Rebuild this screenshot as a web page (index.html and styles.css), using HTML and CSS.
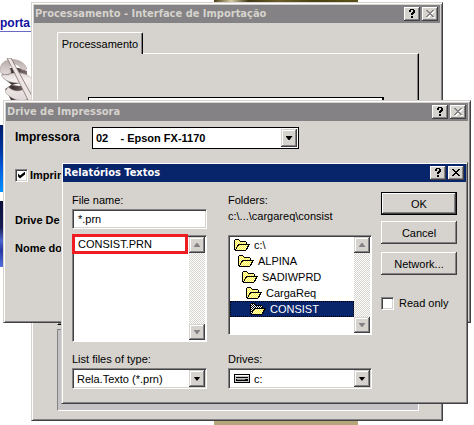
FILE: index.html
```html
<!DOCTYPE html>
<html lang="pt">
<head>
<meta charset="utf-8">
<title>Relatórios Textos</title>
<link rel="stylesheet" href="styles.css">
</head>
<body>
<svg class="defs" aria-hidden="true">
  <defs>
    <pattern id="dither" width="2" height="2" patternUnits="userSpaceOnUse">
      <rect width="2" height="2" fill="#fff04a"/><rect width="1" height="1" fill="#fffbc0"/><rect x="1" y="1" width="1" height="1" fill="#fffbc0"/>
    </pattern>
    <pattern id="shade" width="2" height="2" patternUnits="userSpaceOnUse">
      <rect width="2" height="2" fill="#000"/><rect width="1" height="1" fill="#fff"/><rect x="1" y="1" width="1" height="1" fill="#fff"/>
    </pattern>
    <symbol id="folder" viewBox="0 0 16 12">
      <path d="M0 1h1V0h4v1h1v1h6v1h1v2h3v1h-1v2h-1v2h-1v1h-1v1H1v-1H0z" fill="#000"/>
      <path d="M1 1h4v1h1v1h6v2H4v1H3v2H2v2H1z" fill="url(#dither)"/>
      <path d="M5 6h9v1h-1v2h-1v2H2v-1h1V8h1V7h1z" fill="url(#dither)"/>
    </symbol>
    <symbol id="folder-open" viewBox="0 0 16 12">
      <path d="M0 1h1V0h4v1h1v1h6v1h1v2h3v1h-1v2h-1v2h-1v1h-1v1H1v-1H0z" fill="#000"/>
      <path d="M1 1h4v1h1v1h6v2H4v1H3v2H2v2H1z" fill="url(#shade)"/>
      <path d="M5 6h9v1h-1v2h-1v2H2v-1h1V8h1V7h1z" fill="url(#dither)"/>
    </symbol>
    <symbol id="help" viewBox="0 0 16 14">
      <path d="M5 3h1V2h4v1h1v3h-1v1H9v1H7V6h1V5h1V3H7v2H5zM7 9h2v2H7z" fill="#000"/>
    </symbol>
    <symbol id="cross" viewBox="0 0 16 14">
      <path d="M4 3h2v1h1v1h2V4h1V3h2v1h-1v1h-1v1H9v1h1v1h1v1h1v1h-2V9H9V8H7v1H6v1H4V9h1V8h1V7h1V6H6V5H5V4H4z"/>
    </symbol>
  </defs>
</svg>
<main class="desktop">
  <div class="photo photo-top"></div>
  <div class="photo photo-bottom"></div>
  <a class="site-link" href="#">porta</a>
  <svg class="dollar" viewBox="0 0 32 44" aria-hidden="true">
    <defs>
      <linearGradient id="metal" x2="0" y2="1"><stop offset="0" stop-color="#b5aaa8"/><stop offset=".5" stop-color="#f4eeee"/><stop offset="1" stop-color="#e0d8d8"/></linearGradient>
      <linearGradient id="side"><stop offset="0" stop-color="#8a7a76"/><stop offset=".4" stop-color="#3c302e"/><stop offset="1" stop-color="#8a7a78"/></linearGradient>
    </defs>
    <path d="M1 10 3 20 12 27 20 25 27 26V13l-8-3zM5 31l6-4 18 2v12l-3 3H12z" fill="url(#side)"/>
    <path d="M27 11C25 4 16 0 9 2 1 3-1 10 1 15c5 3 10 2 10-1 0-3-3-5-1-7 3-3 10 0 12 5zM1 17c6 0 14-3 20-2 5 1 9 3 11 6v18c-8 6-20 4-27-5l3-5c6 5 13 5 17 1 2-3 0-5-5-5-7 0-15-1-19-8z" fill="url(#metal)" stroke="#a29592" stroke-width=".5"/>
    <path d="M7 0h4l21 38v6h-3z" fill="#ece4e4" stroke="#74625f" stroke-width=".7"/>
  </svg>
  <div class="strip strip-sky"></div>
  <div class="strip strip-city"></div>

  <section class="window win-process">
    <header class="titlebar inactive"><h2>Processamento - Interface de Importação</h2>
      <button class="cap" aria-label="Ajuda"><svg><use href="#help"/></svg></button><button class="cap close off" aria-label="Fechar"><svg><use href="#cross"/></svg></button></header>
    <div class="process-body">
      <button class="tab">Processamento</button>
      <div class="pane"><div class="grid-frame"></div></div>
      <div class="well"></div>
    </div>
  </section>

  <section class="window win-drive">
    <header class="titlebar inactive"><h2>Drive de Impressora</h2>
      <button class="cap" aria-label="Ajuda"><svg><use href="#help"/></svg></button><button class="cap close off" aria-label="Fechar"><svg><use href="#cross"/></svg></button></header>
    <div class="drive-body">
      <div class="printer-row">
        <label for="printer">Impressora</label>
        <div class="combo flat"><select id="printer"><option>02 &nbsp;&nbsp; - Epson FX-1170</option></select><span class="arrow"></span></div>
      </div>
      <label class="check"><input type="checkbox" checked>Imprin</label>
      <p>Drive De</p>
      <p>Nome do</p>
    </div>
  </section>

  <section class="window win-files">
    <header class="titlebar"><h2>Relatórios Textos</h2>
      <button class="cap" aria-label="Ajuda"><svg><use href="#help"/></svg></button><button class="cap close" aria-label="Fechar"><svg><use href="#cross"/></svg></button></header>
    <form class="files-body">
      <div class="column">
        <div class="head"><label for="fname">File name:</label>
        <input class="field" id="fname" type="text" value="*.prn"></div>
        <div class="listbox files"><ul><li class="marked">CONSIST.PRN</li></ul>
          <div class="scroll"><span class="step up"></span><span class="step down"></span></div></div>
        <label class="lower" for="ftype">List files of type:</label>
        <div class="combo"><select id="ftype"><option>Rela.Texto (*.prn)</option></select><span class="arrow"></span></div>
      </div>
      <div class="column">
        <div class="head"><span>Folders:</span><span>c:\...\cargareq\consist</span></div>
        <div class="listbox folders"><ul>
          <li><svg><use href="#folder"/></svg>c:\</li>
          <li class="d1"><svg><use href="#folder"/></svg>ALPINA</li>
          <li class="d2"><svg><use href="#folder"/></svg>SADIWPRD</li>
          <li class="d3"><svg><use href="#folder"/></svg>CargaReq</li>
          <li class="d4 selected"><svg><use href="#folder-open"/></svg>CONSIST</li></ul>
          <div class="scroll"><span class="step up"></span><span class="step down"></span></div></div>
        <label class="lower" for="drive">Drives:</label>
        <div class="combo with-icon"><svg class="disk" viewBox="0 0 16 9"><path d="M0 0h16v9H0z"/><path d="M1 1h14v7H1z" fill="#c6c3c6"/><path d="M1 1h14v1H1z" fill="#fff"/><path d="M2 3h12v1H2zM2 5h12v2H2z"/><path d="M3 5h8v1H3z" fill="#848284"/></svg><select id="drive"><option>c:</option></select><span class="arrow"></span></div>
      </div>
      <div class="actions">
        <button type="button" class="btn default">OK</button>
        <button type="button" class="btn">Cancel</button>
        <button type="button" class="btn">Network...</button>
        <label class="check"><input type="checkbox">Read only</label>
      </div>
    </form>
  </section>
</main>
</body>
</html>
```

FILE: styles.css
```css
* { box-sizing: border-box; }
body, h2, p, ul { margin: 0; padding: 0; }
ul { list-style: none; }
body {
  background: #fff;
  color: #000;
  font: 11px/16px "Liberation Sans", Arial, sans-serif;
}
button, input, select { font: inherit; color: inherit; border-radius: 0; }
.defs { position: absolute; width: 0; height: 0; }
.desktop { position: relative; height: 100vh; overflow: hidden; }

/* page behind the windows */
.photo { position: absolute; left: 214px; width: 144px; }
.photo-top { top: 0; height: 2px; background: linear-gradient(90deg, #4a3c18, #d6cba5 12%, #423818 24%, #6b5d29 45%, #4a4110 70%, #5a5118); }
.photo-bottom { top: 421px; height: 4px; background: #b5a67b; }
.site-link {
  position: absolute; left: 0; top: 15px; width: 32px;
  border-bottom: 1px solid #6b69c6;
  color: #1010a0; font-weight: bold; font-size: 12px; text-decoration: none;
}
.dollar { position: absolute; left: 0; top: 58px; width: 32px; height: 44px; }
.strip { position: absolute; left: 0; width: 3px; }
.strip-sky { top: 125px; height: 67px; background: linear-gradient(#001c6b, #0038a5 40%, #0055d6 60%, #0092ff); }
.strip-city { top: 201px; height: 66px; background: linear-gradient(#08103a, #181c52 40%, #4a65ce 60%, #2938a5 75%, #5271de); }

/* windows */
.window {
  position: absolute; display: flex; flex-direction: column;
  padding: 1px;
  background: #d6d3ce;
  border: 1px solid; border-color: #d6d3ce #424142 #424142 #d6d3ce;
  box-shadow: inset 1px 1px #fff, inset -1px -1px #848284;
}
.win-process { left: 31px; top: 2px; width: 412px; height: 419px; padding: 2px; }
.win-drive { left: 3px; top: 100px; width: 468px; height: 223px; padding: 2px; }
.win-files { left: 61px; top: 162px; width: 407px; height: 242px; }
.titlebar {
  display: flex; align-items: center; flex: none;
  height: 18px; padding: 0 2px 0 1px;
  background: #08246b; color: #fff;
}
.titlebar.inactive { background: #848284; color: #d6d3ce; }
.titlebar h2 { flex: 1; font: bold 11px/18px "DejaVu Sans Condensed", "DejaVu Sans", sans-serif; white-space: nowrap; }
.cap {
  width: 16px; height: 14px; padding: 0; border: 0;
  background: #d6d3ce;
  box-shadow: inset -1px -1px #424142, inset 1px 1px #fff, inset -2px -2px #848284;
}
.cap svg { display: block; width: 16px; height: 14px; }
.close { margin-left: 2px; }
.off svg { fill: #848284; filter: drop-shadow(1px 1px 0 #fff); }

/* Processamento */
.process-body { display: flex; flex-direction: column; padding: 9px 21px 7px 23px; flex: 1; }
.tab {
  position: relative; align-self: flex-start; width: 86px; height: 22px; padding: 0; margin-bottom: -1px;
  background: #d6d3ce;
  border: 1px solid; border-color: #fff #000 #d6d3ce #fff; border-bottom: 0;
  border-radius: 2px 2px 0 0; box-shadow: inset -1px 0 #848284;
}
.pane { flex: 1; padding: 43px 34px 0 30px; border: 1px solid; border-color: #fff #000 #000 #fff; box-shadow: inset -1px -1px #848284; }
.grid-frame { height: 60px; border: 2px solid #000; border-width: 1px 2px 1px 1px; background: #fff; }
.well { height: 82px; margin-top: 4px; background: #c6c3c6; border: 1px solid; border-color: #848284 #fff #fff #848284; }

/* Drive de Impressora */
.drive-body { padding: 6px 9px; font-weight: bold; }
.printer-row { display: flex; align-items: center; margin-bottom: 18px; }
.printer-row label { width: 77px; margin-bottom: 3px; font-size: 12px; }
.drive-body .check { margin-bottom: 29px; gap: 2px; }
.drive-body p { margin-bottom: 12px; }

/* controls */
.combo {
  display: flex; height: 21px; padding: 2px;
  background: #fff;
  border: 1px solid; border-color: #848284 #fff #fff #848284;
  box-shadow: inset 1px 1px #424142, inset -1px -1px #d6d3ce;
}
.combo select { flex: 1; min-width: 0; appearance: none; border: 0; padding: 0 0 0 2px; margin: 0; background: transparent; outline: 0; }
.flat { width: 207px; height: 22px; padding: 1px; border-color: #000; box-shadow: none; }
.arrow, .step {
  display: flex; align-items: center; justify-content: center; flex: none;
  width: 16px; height: 16px;
  background: #d6d3ce;
  box-shadow: inset -1px -1px #424142, inset 1px 1px #d6d3ce, inset -2px -2px #848284, inset 2px 2px #fff;
}
.combo .arrow { height: auto; margin: -1px -1px -1px 0; }
.flat .arrow { margin: 0; }
.arrow::before { content: ""; width: 7px; height: 4px; background: #000; clip-path: polygon(0 0, 100% 0, 57% 100%, 43% 100%); }
.step::before { content: ""; width: 7px; height: 4px; background: #848284; }
.up::before { clip-path: polygon(43% 0, 57% 0, 100% 100%, 0 100%); }
.down::before { clip-path: polygon(0 0, 100% 0, 57% 100%, 43% 100%); }
.check { display: flex; align-items: center; gap: 5px; }
.check input {
  appearance: none; flex: none; width: 13px; height: 13px; margin: 0;
  background: #fff;
  border: 1px solid; border-color: #848284 #fff #fff #848284;
  box-shadow: inset 1px 1px #424142, inset -1px -1px #d6d3ce;
}
.check input:checked::before {
  content: ""; display: block; width: 7px; height: 7px; margin: 2px; background: #000;
  clip-path: polygon(0 29%, 29% 58%, 100% 0, 100% 43%, 29% 100%, 0 71%);
}

/* Relatórios Textos */
.files-body { display: grid; grid-template-columns: 135px 144px 76px; justify-content: space-between; padding: 10px 9px 0; }
.column { display: flex; flex-direction: column; }
.column:nth-child(2) { margin-left: 6px; margin-right: -6px; }
.head { display: flex; flex-direction: column; height: 43px; }
.field {
  width: 100%; height: 20px; margin-top: 1px; padding: 0 5px;
  border: 1px solid; border-color: #848284 #fff #fff #848284;
  box-shadow: inset 1px 1px #424142, inset -1px -1px #d6d3ce; outline: 0;
}
.listbox {
  display: flex; padding: 1px;
  background: #fff;
  border: 1px solid; border-color: #848284 #fff #fff #848284;
  box-shadow: inset 1px 1px #424142;
}
.listbox ul { flex: 1; }
.listbox li { display: flex; align-items: center; gap: 4px; height: 16px; padding-left: 4px; }
.files { height: 107px; margin-bottom: 9px; }
.folders { height: 100px; margin-bottom: 16px; }
.listbox .marked { height: 20px; margin: -3px 1px 0 -2px; padding-left: 3px; border: 3px solid #ef1c21; }
.listbox svg { width: 16px; height: 12px; }
.listbox .d1 { padding-left: 8px; }
.listbox .d2 { padding-left: 12px; }
.listbox .d3 { padding-left: 16px; }
.listbox .d4 { padding-left: 20px; }
.selected { background: #08246b; color: #fff; outline: 1px dotted #000; outline-offset: -1px; }
.scroll {
  display: flex; flex-direction: column; justify-content: space-between; width: 16px;
  background: conic-gradient(#fff 25%, #d6d3ce 0 50%, #fff 0 75%, #d6d3ce 0) 0 0 / 2px 2px;
}
.lower { margin-bottom: 1px; }
.with-icon { align-items: stretch; padding-left: 5px; }
.disk { width: 16px; height: 9px; align-self: center; flex: none; }
.with-icon select { padding-left: 4px; }
.actions { display: flex; flex-direction: column; }
.btn {
  height: 23px; margin-bottom: 8px; padding: 0; border: 0;
  background: #d6d3ce;
  box-shadow: inset -1px -1px #424142, inset 1px 1px #fff, inset -2px -2px #848284;
}
.default { border: 1px solid #000; margin-bottom: 6px; }
.actions .check { margin-top: 12px; white-space: nowrap; }
```
